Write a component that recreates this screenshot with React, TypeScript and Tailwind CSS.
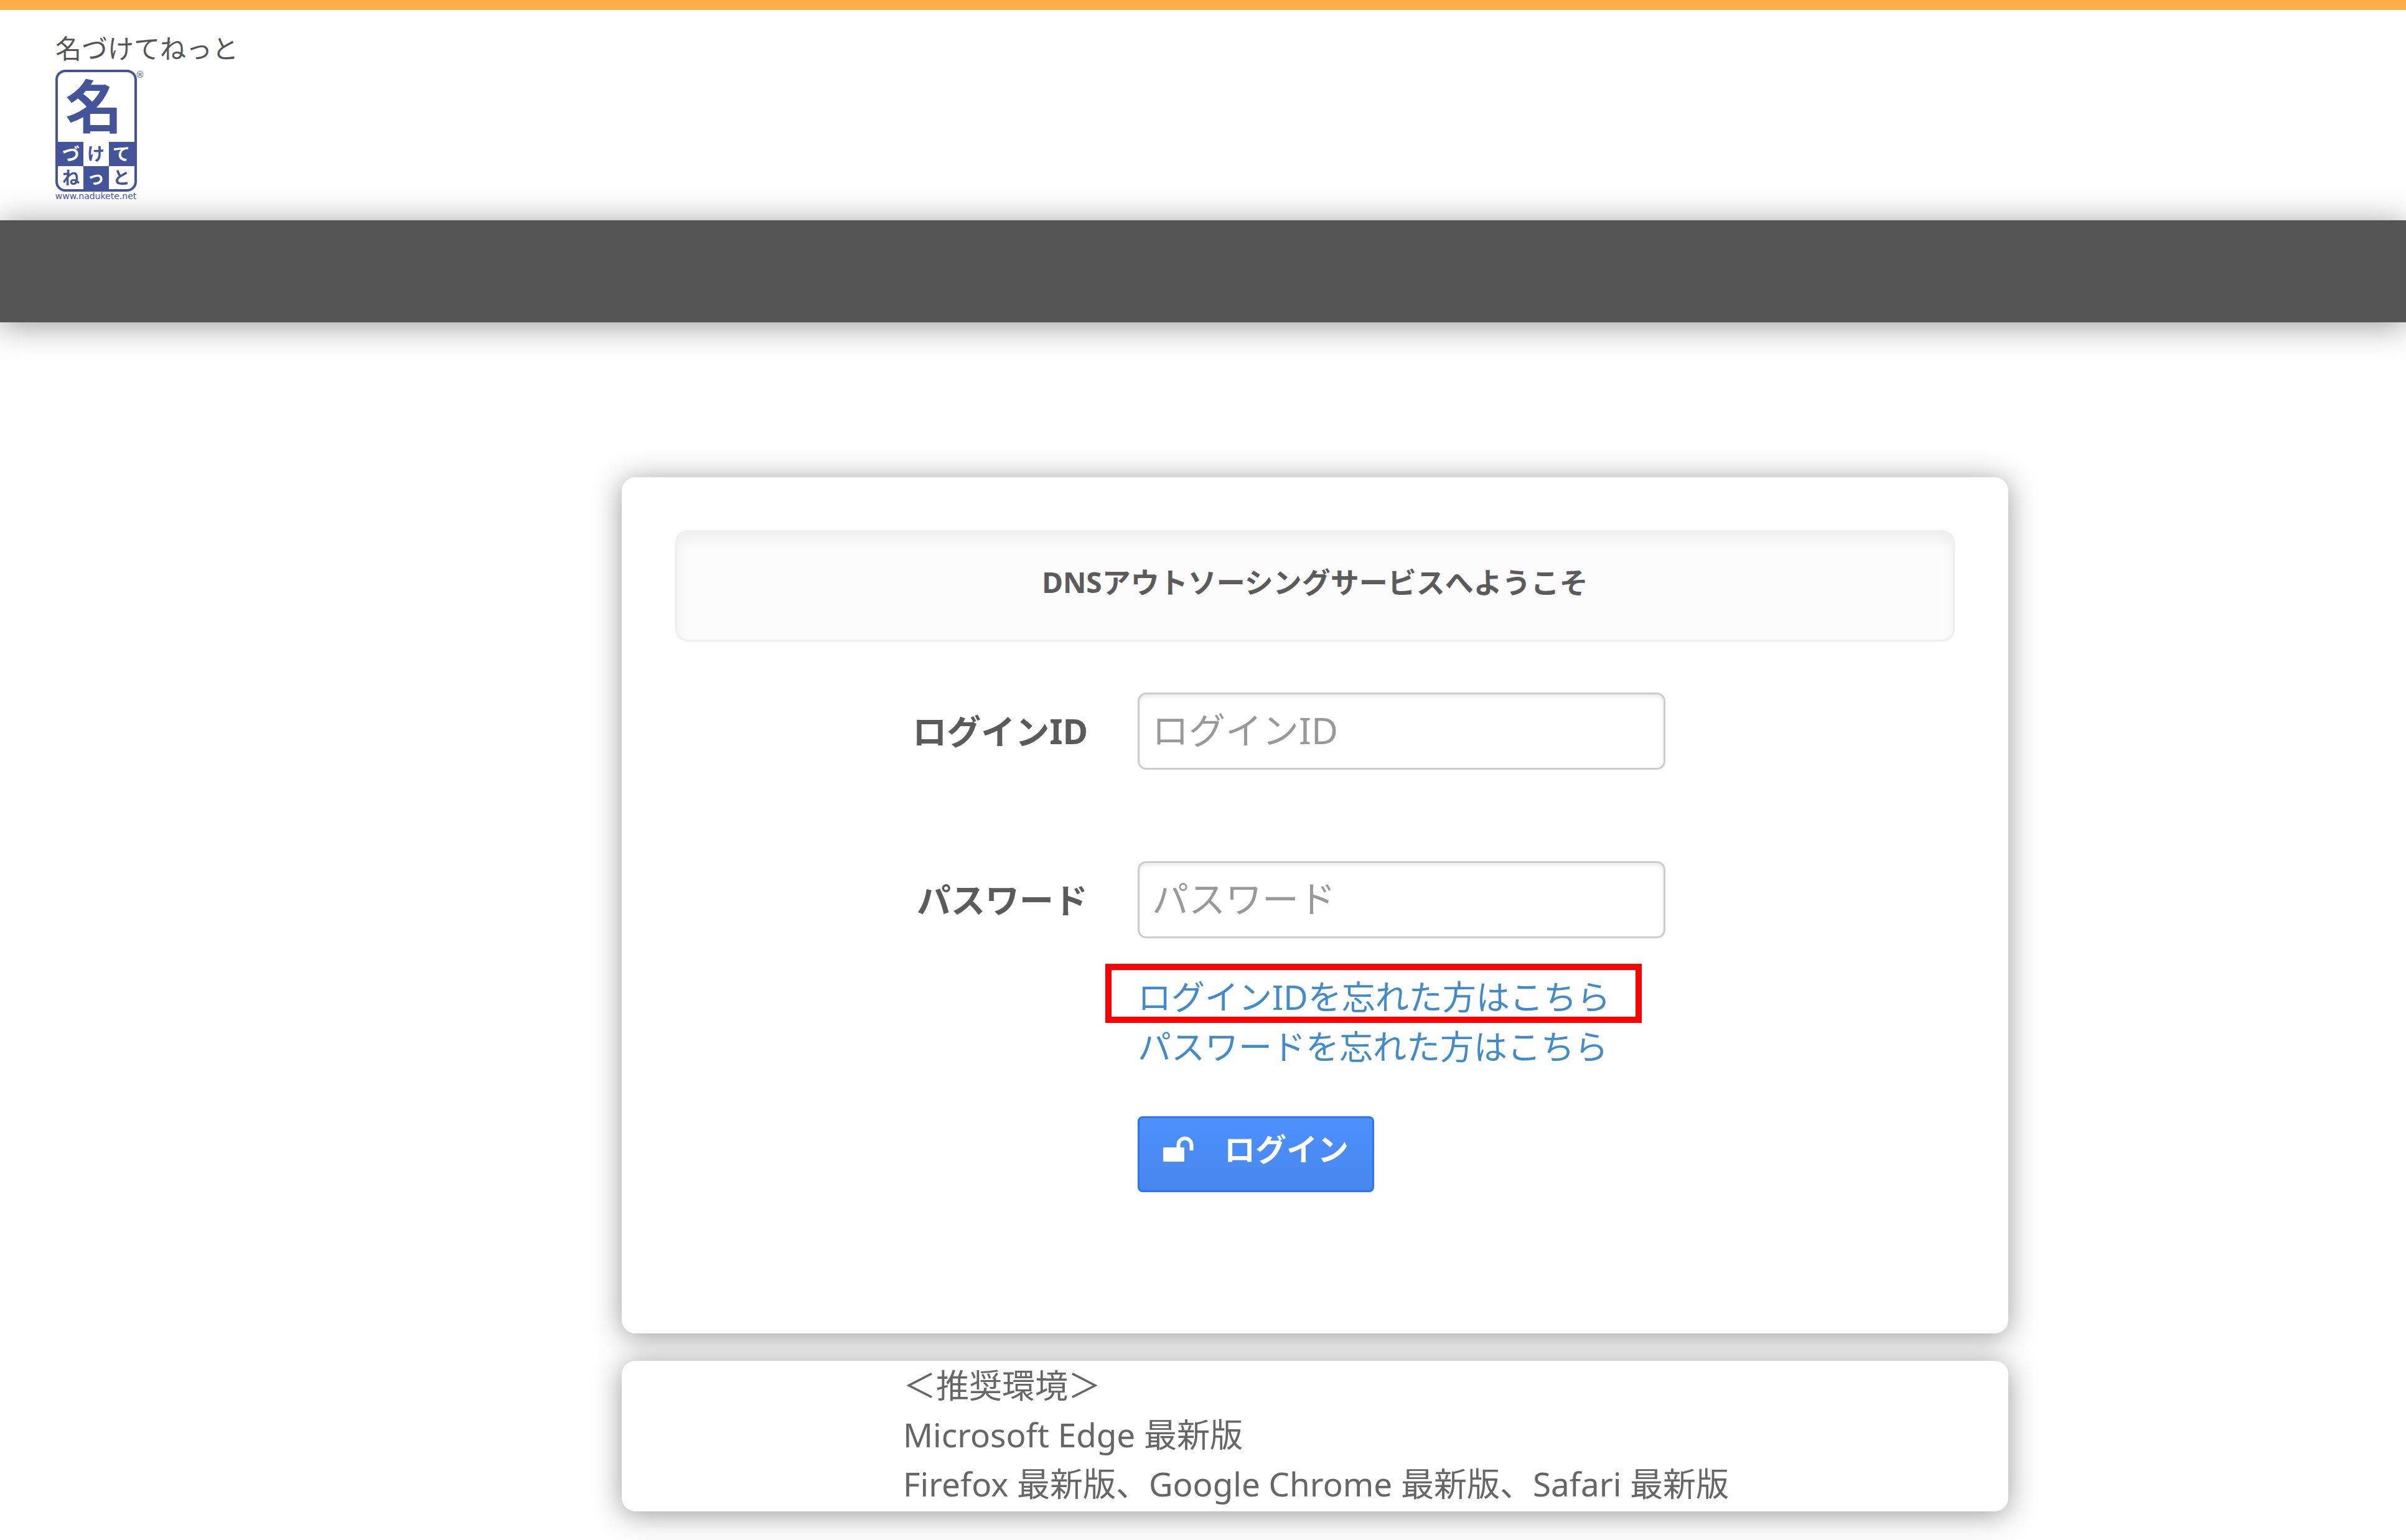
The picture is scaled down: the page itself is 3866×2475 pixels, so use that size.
import type { ReactNode } from "react";

const LOGO_BLUE = "#44549b";

function Logo() {
  return (
    <svg
      className="h-[216px] w-[146px] overflow-visible"
      viewBox="0 0 146 216"
      fill="none"
      role="img"
      aria-label="名づけてねっと"
      fontFamily='"Noto Sans CJK JP", sans-serif'
      textAnchor="middle"
    >
      {/* Frame and checkered cells */}
      <path d="M4 116H45V155H86V116H127V155H86V193H45V155H4Z" fill={LOGO_BLUE} />
      <rect x="2" y="2" width="127" height="192" rx="14" stroke={LOGO_BLUE} strokeWidth="4" />

      <text x="62" y="94" fontSize="92" fontWeight="700" fill={LOGO_BLUE}>名</text>
      <g fontSize="28" fontWeight="700">
        <text x="25" y="146" fill="#fff">づ</text>
        <text x="65" y="146" fill={LOGO_BLUE}>け</text>
        <text x="106" y="146" fill="#fff">て</text>
        <text x="25" y="184" fill={LOGO_BLUE}>ね</text>
        <text x="65" y="184" fill="#fff">っ</text>
        <text x="106" y="184" fill={LOGO_BLUE}>と</text>
      </g>
      <text x="136" y="13" fontSize="14" fontFamily='"DejaVu Sans", sans-serif' fill={LOGO_BLUE}>®</text>
      <text x="65" y="208" fontSize="14" fontFamily='"DejaVu Sans", sans-serif' fill={LOGO_BLUE}>
        www.nadukete.net
      </text>
    </svg>
  );
}

function UnlockIcon() {
  return (
    <svg className="h-[42px] w-[50px]" viewBox="0 0 50 42" fill="none" aria-hidden="true">
      <rect x="0" y="18" width="34" height="23" rx="1" fill="#fff" />
      <path d="M24.500 20V14a10.500 10.500 0 0 1 21 0v9" stroke="#fff" strokeWidth="6" />
    </svg>
  );
}

function Panel({ className, children }: { className: string; children: ReactNode }) {
  return (
    <section className={`rounded-[22px] bg-[#fefefe] shadow-[0_5px_46px_rgba(0,0,0,0.4)] ${className}`}>
      {children}
    </section>
  );
}

function Field({ id, label, type }: { id: string; label: string; type: string }) {
  return (
    <>
      <label htmlFor={id} className="text-right text-[55px] font-bold leading-[80px] text-[#5b5b5b]">
        {label}
      </label>
      <input
        id={id}
        type={type}
        placeholder={label}
        className="h-[124px] w-[848px] max-w-full rounded-[14px] border-3 border-[#ccc] bg-white px-5 pb-1 text-[59px] text-[#555] shadow-[inset_0_4px_6px_rgba(0,0,0,0.08)] placeholder:text-[#999] focus:outline-none"
      />
    </>
  );
}

export default function App() {
  return (
    <div className="bg-[#fefefe] pb-[46px] font-['Noto_Sans','Noto_Sans_CJK_JP',sans-serif] text-[#666]">
      <header className="border-t-16 border-[#ffae49] px-[89px] pb-[26px] pt-8">
        <p className="text-[42px] leading-[60px] text-[#555]">名づけてねっと</p>
        <a href="#" className="mt-1 block w-fit">
          <Logo />
        </a>
      </header>
      <nav className="h-[164px] bg-[#555] shadow-[0_5px_48px_rgba(0,0,0,0.4)]" />

      <main className="grid grid-cols-[999fr_2228fr_639fr] pt-[249px]">
        <div className="col-start-2 flex flex-col gap-11">
          <Panel className="px-[86px] pb-[227px] pt-[85px]">
            <h1 className="rounded-[20px] border-3 border-[#efefef] bg-[#fcfcfc] pb-[58px] pt-[45px] text-center text-[46px] font-bold leading-[70px] text-[#5b5b5b] shadow-[inset_0_14px_18px_rgba(0,0,0,0.05)]">
              DNSアウトソーシングサービスへようこそ
            </h1>

            <form className="mt-[82px] grid grid-cols-[663fr_1313fr] items-center gap-x-20">
              <Field id="login-id" label="ログインID" type="text" />
              <div className="col-span-2 h-[147px]" />
              <Field id="password" label="パスワード" type="password" />

              <div className="col-start-2 mt-[54px] flex flex-col items-start text-[54px] leading-[80px] text-[#428bca]">
                <a href="#" className="relative">
                  ログインIDを忘れた方はこちら
                  {/* Highlight frame over the link */}
                  <span className="absolute -left-[52px] -top-[13px] h-[95px] w-[862px] border-10 border-[#ff0000]" />
                </a>
                <a href="#">パスワードを忘れた方はこちら</a>
              </div>

              <button
                type="button"
                className="col-start-2 mt-[72px] flex h-[122px] w-fit items-center gap-12 rounded-lg border-3 border-[#2f76ee] bg-linear-to-b from-[#4d90fe] to-[#4787ed] px-[38px] pb-4 text-[50px] font-bold text-white"
              >
                <UnlockIcon />
                ログイン
              </button>
            </form>
          </Panel>

          <Panel className="pb-[5px] pl-[452px] text-[53px] leading-[79px]">
            <p>＜推奨環境＞</p>
            <p>Microsoft Edge 最新版</p>
            <p>Firefox 最新版、Google Chrome 最新版、Safari 最新版</p>
          </Panel>
        </div>
      </main>
    </div>
  );
}
